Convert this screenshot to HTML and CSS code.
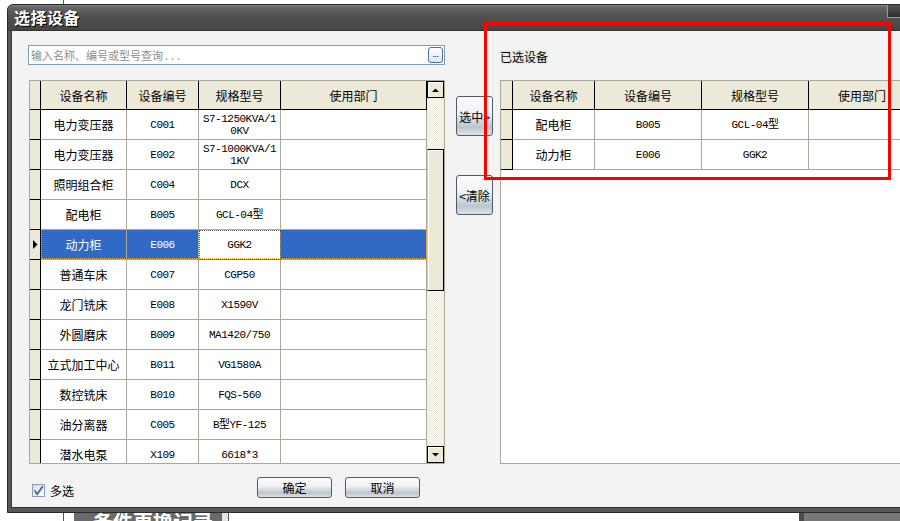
FILE: index.html
```html
<!DOCTYPE html>
<html lang="zh-CN">
<head>
<meta charset="utf-8">
<title>选择设备</title>
<link rel="stylesheet" href="styles.css">
</head>
<body>
<div class="desk">
  <div class="desk-upper"></div>
  <div class="desk-strip">
    <div class="ds-white"></div>
    <div class="ds-blue"></div>
    <div class="ds-gap"></div>
    <div class="ds-panel">备件更换记录</div>
    <div class="ds-sep"></div>
    <div class="ds-field"></div>
    <div class="ds-dark"></div>
    <div class="ds-gray"></div>
  </div>
</div>

<div class="dialog">
  <div class="titlebar"><span class="title">选择设备</span><span class="title-ctl"></span></div>
  <div class="frame">
    <div class="client">
      <div class="main">
        <div class="left">
          <div class="search">
            <span class="placeholder">输入名称、编号或型号查询<span class="dots">...</span></span>
            <span class="search-btn">...</span>
          </div>
          <div class="grid left-grid">
            <div class="gmain">
              <div class="ghead cols-l">
                <div class="hc"></div><div class="hc">设备名称</div><div class="hc">设备编号</div><div class="hc">规格型号</div><div class="hc">使用部门</div>
              </div>
              <div class="grow cols-l"><div class="c ind"></div><div class="c">电力变压器</div><div class="c mono">C001</div><div class="c mono">S7-1250KVA/1<br>0KV</div><div class="c"></div></div>
              <div class="grow cols-l"><div class="c ind"></div><div class="c">电力变压器</div><div class="c mono">E002</div><div class="c mono">S7-1000KVA/1<br>1KV</div><div class="c"></div></div>
              <div class="grow cols-l"><div class="c ind"></div><div class="c">照明组合柜</div><div class="c mono">C004</div><div class="c mono">DCX</div><div class="c"></div></div>
              <div class="grow cols-l"><div class="c ind"></div><div class="c">配电柜</div><div class="c mono">B005</div><div class="c mono">GCL-04型</div><div class="c"></div></div>
              <div class="grow cols-l sel"><div class="c ind"><svg width="5" height="9" viewBox="0 0 5 9"><polygon points="0,0 4.5,4.5 0,9" fill="#000"/></svg></div><div class="c">动力柜</div><div class="c mono">E006</div><div class="c mono cur">GGK2</div><div class="c"></div></div>
              <div class="grow cols-l"><div class="c ind"></div><div class="c">普通车床</div><div class="c mono">C007</div><div class="c mono">CGP50</div><div class="c"></div></div>
              <div class="grow cols-l"><div class="c ind"></div><div class="c">龙门铣床</div><div class="c mono">E008</div><div class="c mono">X1590V</div><div class="c"></div></div>
              <div class="grow cols-l"><div class="c ind"></div><div class="c">外圆磨床</div><div class="c mono">B009</div><div class="c mono">MA1420/750</div><div class="c"></div></div>
              <div class="grow cols-l"><div class="c ind"></div><div class="c">立式加工中心</div><div class="c mono">B011</div><div class="c mono">VG1580A</div><div class="c"></div></div>
              <div class="grow cols-l"><div class="c ind"></div><div class="c">数控铣床</div><div class="c mono">B010</div><div class="c mono">FQS-560</div><div class="c"></div></div>
              <div class="grow cols-l"><div class="c ind"></div><div class="c">油分离器</div><div class="c mono">C005</div><div class="c mono">B型YF-125</div><div class="c"></div></div>
              <div class="grow cols-l"><div class="c ind"></div><div class="c">潜水电泵</div><div class="c mono">X109</div><div class="c mono">6618*3</div><div class="c"></div></div>
            </div>
            <div class="vscroll">
              <div class="sb-btn"><svg width="7" height="4" viewBox="0 0 7 4"><polygon points="0,4 7,4 3.5,0.5" fill="#000"/></svg></div>
              <div class="sb-track"><div class="sb-thumb"></div></div>
              <div class="sb-btn"><svg width="7" height="4" viewBox="0 0 7 4"><polygon points="0,0 7,0 3.5,3.5" fill="#000"/></svg></div>
            </div>
          </div>
        </div>

        <div class="mid">
          <div class="btn side-btn">选中&gt;</div>
          <div class="btn side-btn">&lt;清除</div>
        </div>

        <div class="right">
          <div class="sel-label">已选设备</div>
          <div class="grid right-grid">
            <div class="gmain">
              <div class="ghead cols-r">
                <div class="hc"></div><div class="hc">设备名称</div><div class="hc">设备编号</div><div class="hc">规格型号</div><div class="hc">使用部门</div>
              </div>
              <div class="grow cols-r"><div class="c ind"></div><div class="c">配电柜</div><div class="c mono">B005</div><div class="c mono">GCL-04型</div><div class="c"></div></div>
              <div class="grow cols-r"><div class="c ind"></div><div class="c">动力柜</div><div class="c mono">E006</div><div class="c mono">GGK2</div><div class="c"></div></div>
            </div>
          </div>
        </div>
      </div>

      <div class="footer">
        <label class="check-group">
          <svg class="chk" width="13" height="13" viewBox="0 0 13 13">
            <defs><linearGradient id="cg" x1="0" y1="0" x2="1" y2="1"><stop offset="0" stop-color="#d9d9d4"/><stop offset="1" stop-color="#ffffff"/></linearGradient></defs>
            <rect x="0.5" y="0.5" width="12" height="12" fill="url(#cg)" stroke="#8b9cb8"/>
            <path d="M2.6 6.4 L5.2 10.3 L10.8 2.2" fill="none" stroke="#4a58a8" stroke-width="1.7"/>
          </svg>
          <span>多选</span>
        </label>
        <div class="foot-btns">
          <div class="btn fbtn">确定</div>
          <div class="btn fbtn">取消</div>
        </div>
      </div>
    </div>
  </div>
</div>

<div class="highlight"></div>
</body>
</html>
```

FILE: styles.css
```css
* { box-sizing: border-box; }
html, body { margin: 0; padding: 0; }
body {
  width: 900px; height: 521px; overflow: hidden; position: relative;
  background: #fff;
  font-family: "Noto Sans CJK SC", "Noto Sans", sans-serif;
  font-size: 12px; color: #000;
}

/* background application */
.desk { height: 521px; display: flex; flex-direction: column; }
.desk-upper { flex: 0 0 511px; margin-left: 63px; border-left: 1px solid #2f55c0; }
.desk-strip { flex: 1; display: flex; }
.ds-white { width: 63px; background: #fff; }
.ds-blue { width: 1px; background: #2f55c0; }
.ds-gap { width: 10px; background: #fff; }
.ds-panel {
  width: 148px; background: #6a6a6a; color: #fff; font-weight: bold;
  font-size: 20px; line-height: 22px; padding-left: 19px; overflow: hidden; white-space: nowrap;
}
.ds-sep { width: 6px; background: #e4e4e4; }
.ds-field { width: 571px; background: #fff; border-left: 1px solid #555; border-bottom: 3px solid #8c8c8c; }
.ds-dark { width: 5px; background: #4c4c4c; }
.ds-gray { flex: 1; background: #777; }

/* dialog window */
.dialog {
  position: absolute; left: 7px; top: 4px; width: 940px; height: 509px;
  border: 1px solid #2a2a2a; border-radius: 6px 6px 0 0;
  background: #585858; display: flex; flex-direction: column; overflow: hidden;
}
.titlebar {
  flex: 0 0 26px; display: flex;
  background: linear-gradient(to bottom, #858585 0, #666 2px, #525252 40%, #434544 100%);
}
.title {
  padding-left: 6px; color: #fff; font-weight: bold; font-size: 16px; line-height: 24px;
  letter-spacing: 0.5px; text-shadow: 1px 1px 0 #000;
}
.title-ctl {
  margin-left: auto; margin-right: 19px; width: 40px; height: 13px;
  border: 1px solid #9a9a9a; border-top: none;
  background: linear-gradient(#575757, #2c2c2c);
}
.frame { flex: 1; padding: 0 4px 5px 4px; background: #575757; }
.client {
  height: 476px; background: #f3f3f3; padding: 14px 0 0 16px;
  box-shadow: 0 0 0 1px #333; display: flex; flex-direction: column;
}

.main { display: flex; align-items: flex-start; height: 419px; }
.left { width: 417px; display: flex; flex-direction: column; }

.search {
  height: 20px; border: 1px solid #7f9db9; background: #fff;
  display: flex; align-items: center; padding: 0 1px 0 2px;
}
.placeholder { flex: 1; color: #8d8d8d; font-size: 11px; line-height: 14px; white-space: nowrap; }
.dots { letter-spacing: 3px; margin-left: 2px; }
.search-btn {
  width: 15px; height: 16px; border: 1px solid #4d6d9c; border-radius: 3px;
  background: linear-gradient(#fff, #e1e7ef);
  font-family: "Liberation Sans", sans-serif; font-size: 9px; line-height: 13px;
  text-align: center; letter-spacing: -0.5px; color: #000;
}

/* grids */
.grid { border: 1px solid #aca899; background: #fff; display: flex; height: 384px; }
.left-grid { margin: 15px 0 0 1px; width: 416px; }
.right-grid { margin-top: 16px; width: 417px; }
.gmain { display: flex; flex-direction: column; overflow: hidden; }
.left-grid .gmain { width: 397px; }
.right-grid .gmain { width: 415px; }
.ghead, .grow { display: grid; flex: none; }
.cols-l { grid-template-columns: 11px 86px 72px 82px 146px; }
.cols-r { grid-template-columns: 12px 82px 107px 107px 107px; }
.ghead { height: 29px; background: #ece9d8; }
.hc {
  border-right: 1px solid #000; border-bottom: 1px solid #000;
  display: flex; align-items: center; justify-content: center; white-space: nowrap;
}
.grow { height: 30px; }
.c {
  border-right: 1px solid #aca899; border-bottom: 1px solid #aca899;
  display: flex; align-items: center; justify-content: center;
  text-align: center; line-height: 12px; white-space: nowrap;
}
.c.ind { background: #ece9d8; border-right-color: #000; border-bottom-color: #000; }
.mono {
  font-family: "Liberation Mono", "Noto Sans CJK SC", monospace;
  font-size: 11px; letter-spacing: -0.5px;
}
.grow.sel { position: relative; }
.grow.sel .c:not(.ind) { background: #316ac5; color: #fff; }
.grow.sel .c.cur { background: #fff; color: #000; outline: 1px dotted #555; outline-offset: -1px; }
.grow.sel::after {
  content: ""; position: absolute; left: 11px; top: -1px; right: 0; bottom: 1px;
  border: 1px dotted #e0a33a; pointer-events: none;
}

/* scrollbar */
.vscroll { width: 17px; display: flex; flex-direction: column; }
.sb-btn {
  flex: 0 0 17px; border: 1px solid #000; background: #ece9d8;
  box-shadow: inset 1px 1px #fff;
  display: flex; align-items: center; justify-content: center;
}
.sb-btn svg { display: block; }
.sb-track { flex: 1; background: repeating-conic-gradient(#e8e6da 0% 25%, #fff 0% 50%) 0 0 / 2px 2px; }
.sb-thumb {
  margin-top: 51px; height: 142px; background: #ece9d8;
  border: 1px solid #000; border-left-color: #cfccbd; box-shadow: inset 1px 1px #fff;
}

/* buttons */
.btn {
  border: 1px solid #4f5b66; border-radius: 3px;
  background: linear-gradient(to bottom, #fbfbfc 0%, #f0f2f4 42%, #d6dce1 60%, #bcc5cd 80%, #dfe3e7 100%);
  display: flex; align-items: center; justify-content: center; white-space: nowrap;
}
.mid { margin-left: 11px; width: 37px; padding-top: 51px; display: flex; flex-direction: column; gap: 39px; }
.side-btn { height: 40px; overflow: visible; }

.right { margin-left: 7px; width: 417px; display: flex; flex-direction: column; align-items: flex-start; }
.sel-label { margin-top: 5px; height: 14px; line-height: 14px; background: #ecebe4; }

/* footer */
.footer { margin-top: 13px; height: 21px; display: flex; }
.check-group { width: 229px; padding: 5px 0 0 4px; display: flex; align-items: center; gap: 5px; }
.chk { display: block; }
.foot-btns { display: flex; gap: 13px; }
.fbtn { width: 75px; height: 21px; }

/* annotation overlay */
.highlight {
  position: absolute; left: 484px; top: 22px; width: 407px; height: 158px;
  border: 3px solid #ff0000;
}
```
